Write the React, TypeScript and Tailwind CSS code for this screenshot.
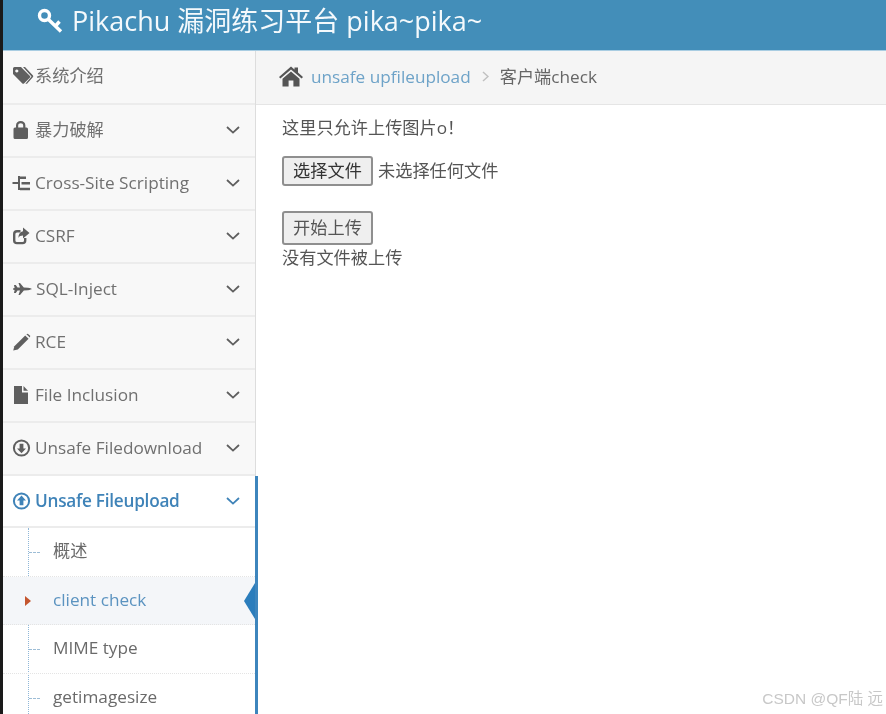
import React from "react";

const font = "font-['Open_Sans','Noto_Sans_CJK_SC',sans-serif]";

const Ico = ({ children, w = 22, h = 20 }: { children: React.ReactNode; w?: number; h?: number }) => (
  <svg width={w} height={h} viewBox={`0 0 ${w} ${h}`} className="shrink-0 block overflow-visible" fill="currentColor">
    {children}
  </svg>
);

const TagIcon = () => (
  <Ico>
    <path fillRule="evenodd" d="M1 2.5 Q1 1 2.5 1 H9 L18 10 Q18.6 10.8 18 11.5 L12 17.5 Q11.2 18.2 10.4 17.5 L1 8 Z M4.8 3.4 A1.6 1.6 0 1 0 4.81 3.4 Z" />
    <path d="M11 1 H13 L21 9.5 Q21.5 10.5 21 11 L15 17.8 H13.4 L19.5 10.6 Z" />
  </Ico>
);
const LockIcon = () => (
  <Ico>
    <path d="M1.5 9 Q1.5 7.5 3 7.5 H4 V5.5 C4 2.5 6 1 8.7 1 C11.4 1 13.4 2.5 13.4 5.5 V7.5 H14.5 Q16 7.5 16 9 V17.5 Q16 19 14.5 19 H3 Q1.5 19 1.5 17.5 Z M6.2 7.5 H11.2 V5.5 C11.2 4 10.2 3.2 8.7 3.2 C7.2 3.2 6.2 4 6.2 5.5 Z" fillRule="evenodd" />
  </Ico>
);
const TreeIcon = () => (
  <Ico>
    <path d="M0.5 9 H6 V11 H0.5 Z M6 3 H8 V17 H6 Z M8 3.5 H14 V6 H8 Z M9.5 9 H18 V11.4 H9.5 Z M8 14.8 H18 V17.2 H8 Z" />
  </Ico>
);
const ShareIcon = () => (
  <Ico>
    <path d="M12 12 V14.5 Q12 16 10.5 16 H5 Q3.4 16 3.4 14.5 V8 Q3.4 6.4 5 6.4 H8.5 V4 H5 Q1 4 1 8 V14.5 Q1 18.3 5 18.3 H10.5 Q14.4 18.3 14.4 14.5 V12 Z" />
    <path d="M11 1.5 L17.5 7 L11 12.5 V9.4 C8.6 9.4 7.3 10 6.4 12 C6.3 8.4 8 6 11 5.3 Z" />
  </Ico>
);
const JetIcon = () => (
  <Ico>
    <path d="M2 6 L3.8 6 L5.5 8.6 L8 8.6 L6.5 4 H8 L11.8 8.4 L16 8.8 C18 9.2 19.5 9.6 20 10 C19.5 10.4 18 10.8 16 11.2 L11.8 11.6 L8 16 H6.5 L8 11.4 L5.5 11.4 L3.8 14 H2 L2.6 11 L1 10.6 V9.4 L2.6 9 Z" />
  </Ico>
);
const PencilIcon = () => (
  <Ico>
    <path d="M1.2 18.6 L2.4 14.2 L13.2 3.4 L16.6 6.8 L5.8 17.6 Z" />
    <path d="M14.4 2.2 Q15.4 1.4 16.4 2.2 L17.8 3.6 Q18.6 4.6 17.8 5.6 L14.4 2.2 Z" />
  </Ico>
);
const FileIcon = () => (
  <Ico>
    <path d="M2 1 H10 V7.5 H16 V19 H2 Z" />
    <path d="M11.5 1 L16 5.8 H11.5 Z" />
  </Ico>
);
const CircleArrow = ({ up = false }: { up?: boolean }) => (
  <Ico>
    <circle cx="9.5" cy="10" r="7.6" fill="none" stroke="currentColor" strokeWidth="2" />
    {up ? (
      <path d="M9.5 4.6 L14 9.6 H11.4 V14.2 H7.6 V9.6 H5 Z" />
    ) : (
      <path d="M9.5 15.2 L14 10.4 H11.4 V5.8 H7.6 V10.4 H5 Z" />
    )}
  </Ico>
);
const Chevron = () => (
  <svg width="14" height="8" viewBox="0 0 14 8" className="ml-auto shrink-0">
    <path d="M1 1 L7 6.6 L13 1" fill="none" stroke="currentColor" strokeWidth="1.8" />
  </svg>
);

function MenuRow({ icon, label, chevron = true, active = false, gap = "", size = "h-[53px] pb-[1px]" }: { icon: React.ReactNode; label: string; chevron?: boolean; active?: boolean; gap?: string; size?: string }) {
  return (
    <div className={`${size} shrink-0 flex items-center border-b-2 border-[#ececec] pl-[9px] pr-[15px] ${active ? "bg-white text-[#3f83b8]" : "text-[#5f5f5f]"}`}>
      <span className="w-[23px] shrink-0">{icon}</span>
      <span className={`text-[17.2px] leading-5 whitespace-nowrap ${gap} ${active ? "font-semibold tracking-[-0.25px]" : "text-[#707070]"}`}>{label}</span>
      {chevron && <Chevron />}
    </div>
  );
}

function SubRow({ label, current = false }: { label: string; current?: boolean }) {
  return (
    <div className={`relative h-[48.7px] shrink-0 flex items-center pl-[50px] pb-[2px] text-[17.2px] border-b border-dotted border-[#e4e4e4] ${current ? "bg-[#f4f6f9] text-[#5b93c0]" : "text-[#6a6a6a]"}`}>
      {!current && <span className="absolute left-[26px] top-1/2 w-[11px] border-t border-dashed border-[#9dbdd6]" />}
      {current && (
        <>
          <span className="absolute left-[22px] top-1/2 -translate-y-1/2 w-0 h-0 border-y-[5px] border-y-transparent border-l-[6px] border-l-[#c4562f]" />
          <span className="absolute right-0 top-1/2 -translate-y-1/2 w-0 h-0 border-y-[18px] border-y-transparent border-r-[11px] border-r-[#2b7dbc]" />
        </>
      )}
      {label}
    </div>
  );
}

export default function App() {
  return (
    <div className={`w-[886px] h-[714px] overflow-hidden flex bg-white blur-[0.35px] ${font}`}>
      <div className="w-[3px] shrink-0 bg-[#1a1a1a]" />
      <div className="flex-1 flex flex-col min-w-0">
        <header className="h-[51px] shrink-0 bg-[#438eb9] border-b border-[#a9cde2] flex items-center pl-[34px] pb-[9px] text-white">
          <svg width="26" height="25" viewBox="0 0 26 25" className="shrink-0 mr-[9px]" fill="none" stroke="currentColor" strokeWidth="3.4">
            <circle cx="7.5" cy="7.5" r="5" />
            <path d="M11.5 11.5 L24 23.5 M18.5 18 L22.5 13.5" />
          </svg>
          <span className="text-[27px] leading-8 whitespace-nowrap text-[#f4f9fc]">Pikachu 漏洞练习平台 pika~pika~</span>
        </header>
        <div className="flex-1 flex min-h-0">
          <aside className="w-[253px] shrink-0 flex flex-col bg-[#f8f8f8]">
            <div className="border-r border-[#dddddd] flex flex-col shrink-0">
              <MenuRow size="h-[54px] pb-[3px]" icon={<TagIcon />} label="系统介绍" chevron={false} />
              <MenuRow icon={<LockIcon />} label="暴力破解" />
              <MenuRow icon={<TreeIcon />} label="Cross-Site Scripting" />
              <MenuRow icon={<ShareIcon />} label="CSRF" />
              <MenuRow icon={<JetIcon />} label="SQL-Inject" gap="ml-[1px]" />
              <MenuRow icon={<PencilIcon />} label="RCE" />
              <MenuRow icon={<FileIcon />} label="File Inclusion" />
              <MenuRow icon={<CircleArrow />} label="Unsafe Filedownload" />
            </div>
            <div className="flex-1 min-h-0 w-[255px] relative z-10 flex flex-col bg-white border-r-[3px] border-[#3d85bd] overflow-hidden">
              <MenuRow size="h-[52px]" active icon={<CircleArrow up />} label="Unsafe Fileupload" />
              <div className="relative flex flex-col">
                <span className="absolute left-[25px] top-0 h-[190px] border-l border-dotted border-[#8fb7d8]" />
                <SubRow label="概述" />
                <SubRow label="client check" current />
                <SubRow label="MIME type" />
                <SubRow label="getimagesize" />
              </div>
            </div>
          </aside>
          <main className="flex-1 min-w-0 flex flex-col relative">
            <div className="h-[54px] shrink-0 bg-[#f5f5f5] border-b border-[#e5e5e5] flex items-center pl-[23px] pb-[2px] text-[17.2px] whitespace-nowrap">
              <svg width="24" height="21" viewBox="0 0 24 21" className="shrink-0 mr-[8px] text-[#555555]" fill="currentColor">
                <path d="M12 0.5 L15.5 3.6 V1.5 H19 V6.6 L24 11 L22.6 12.6 L12 3.4 L1.4 12.6 L0 11 Z" />
                <path d="M12 5.4 L20.5 12.8 V20.5 H14.4 V14.4 H9.6 V20.5 H3.5 V12.8 Z" />
              </svg>
              <span className="text-[#6ea3c8]">unsafe upfileupload</span>
              <svg width="7" height="11" viewBox="0 0 7 11" className="shrink-0 mx-[11px] text-[#c0c0c0]">
                <path d="M1 1 L6 5.5 L1 10" fill="none" stroke="currentColor" strokeWidth="1.5" />
              </svg>
              <span className="text-[#666666]">客户端check</span>
            </div>
            <div className="pl-[26px] pt-[11px] text-[17.2px] leading-[24px] text-[#555555]">
              <p className="h-[24px]">这里只允许上传图片o！</p>
              <div className="mt-[16px] flex items-center h-[30px]">
                <button className="w-[91px] h-[30px] bg-[#efefef] border-2 border-[#8f8f8f] rounded-[3px] text-[#333333] leading-none">选择文件</button>
                <span className="ml-[5px]">未选择任何文件</span>
              </div>
              <button className="mt-[25px] block w-[91px] h-[34px] bg-[#efefef] border-2 border-[#8f8f8f] rounded-[3px] text-[#555555] leading-none">开始上传</button>
              <p className="h-[24px] mt-[1px]">没有文件被上传</p>
            </div>
            <span className="absolute right-[3px] bottom-[4px] text-[15.5px] text-[#c8c8c8] whitespace-nowrap font-['Liberation_Sans','Noto_Sans_CJK_SC',sans-serif]">CSDN @QF陆 远</span>
          </main>
        </div>
      </div>
    </div>
  );
}
